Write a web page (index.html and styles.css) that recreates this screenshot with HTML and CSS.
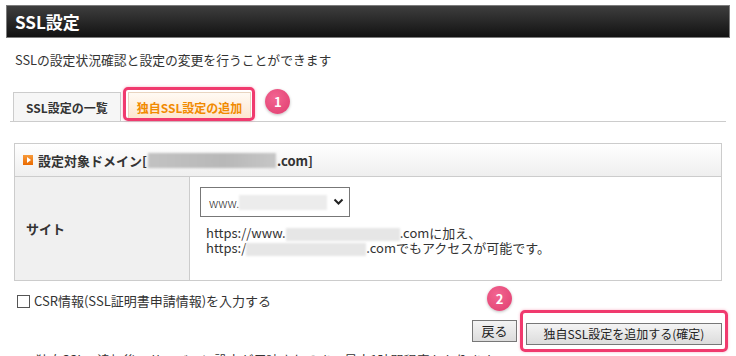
FILE: index.html
```html
<!DOCTYPE html>
<html lang="ja">
<head>
    <meta charset="UTF-8" />
    <title>SSL設定</title>
    <link rel="stylesheet" href="styles.css">
</head>
<body>
    <div class="page">
        <div class="title-bar">
            <h1>SSL設定</h1>
        </div>
        <p class="lead">SSLの設定状況確認と設定の変更を行うことができます</p>

        <div class="tabs">
            <div class="tab">SSL設定の一覧</div>
            <div class="tab tab-active">
                独自SSL設定の追加
                <span class="mark mark-tab"></span>
            </div>
            <span class="badge badge-tab">1</span>
        </div>

        <div class="panel">
            <div class="panel-head">
                <span class="icon-arrow"></span>
                設定対象ドメイン[<span class="blur blur-dark"></span>.com]
            </div>
            <div class="panel-row">
                <div class="cell-label">サイト</div>
                <div class="cell-value">
                    <div class="select">
                        <span>www.</span><span class="blur blur-select"></span>
                        <svg class="chevron" width="11" height="8" viewBox="0 0 11 8">
                            <path d="M1.5 1.5 L5.5 5.5 L9.5 1.5" fill="none" stroke="#222" stroke-width="2"/>
                        </svg>
                    </div>
                    <div class="note">
                        <div class="note-line">https://www.<span class="blur blur-a"></span>.comに加え、</div>
                        <div class="note-line">https:/<span class="blur blur-b"></span>.comでもアクセスが可能です。</div>
                    </div>
                </div>
            </div>
        </div>

        <label class="check">
            <span class="box"></span>CSR情報(SSL証明書申請情報)を入力する
        </label>

        <div class="actions">
            <button class="btn btn-back">戻る</button>
            <div class="btn-wrap">
                <button class="btn btn-main">独自SSL設定を追加する(確定)</button>
                <span class="mark mark-btn"></span>
                <span class="badge badge-btn">2</span>
            </div>
        </div>

        <p class="foot">※独自SSLの追加後、サーバーに設定が反映されるまで最大1時間程度かかります。</p>
    </div>
</body>
</html>
```

FILE: styles.css
```css
body {
    font-family: "Noto Sans CJK JP", "DejaVu Sans", sans-serif;
    margin: 0;
    padding: 0;
    color: #333;
    background: #fff;
    overflow: hidden;
}

.page {
    width: 724px;
    height: 356px;
    padding: 5px 6px 0 6px;
}

.title-bar {
    height: 31px;
    border: 1px solid #7c7c7c;
    background: linear-gradient(#3e3e3e, #121212);
    display: flex;
    align-items: center;
    padding-left: 8px;
}

    .title-bar h1 {
        margin: 0;
        font-size: 17px;
        font-weight: bold;
        color: #fff;
        line-height: 1;
    }

.lead {
    margin: 14px 0 0 9px;
    font-size: 12.8px;
    line-height: 16px;
}

.tabs {
    margin: 24px 4px 0 4px;
    display: flex;
    align-items: flex-end;
    border-bottom: 1px solid #ccc;
    height: 29px;
}

.tab {
    position: relative;
    height: 29px;
    box-sizing: border-box;
    margin-left: 3px;
    padding: 0 12px;
    border: 1px solid #ccc;
    border-bottom: none;
    background: #f6f6f6;
    font-size: 12px;
    font-weight: bold;
    line-height: 29px;
}

.tab-active {
    margin-left: 7px;
    padding: 0 8px;
    color: #f18a00;
    background: linear-gradient(#fffaf4, #fde4cb);
    border-color: #e8d4c0;
}

.mark {
    position: absolute;
    border: 3px solid #f03a6e;
    border-radius: 5px;
    box-shadow: 0 0 3px rgba(240, 58, 110, 0.4);
}

.mark-tab {
    left: -6px;
    right: -5px;
    top: -6px;
    bottom: 0;
}

.badge {
    width: 25px;
    height: 25px;
    border-radius: 50%;
    background: radial-gradient(circle at 40% 35%, #f26591, #e03d6f);
    box-shadow: 0 1px 3px rgba(0, 0, 0, 0.25);
    color: #fff;
    font-size: 13px;
    font-weight: bold;
    line-height: 25px;
    text-align: center;
}

.badge-tab {
    align-self: flex-start;
    margin: -3px 0 0 14px;
}

.panel {
    margin: 21px 8px 0 8px;
    border: 1px solid #ccc;
}

.panel-head {
    height: 32px;
    display: flex;
    align-items: center;
    padding-left: 8px;
    border-bottom: 1px solid #ccc;
    background: linear-gradient(#fff, #efefef);
    font-size: 13px;
    font-weight: bold;
}

.icon-arrow {
    width: 10px;
    height: 10px;
    margin-right: 5px;
    background: linear-gradient(#f79a3a, #ea6a00);
    position: relative;
}

    .icon-arrow::after {
        content: "";
        position: absolute;
        left: 4px;
        top: 2px;
        border-left: 4px solid #fff;
        border-top: 3px solid transparent;
        border-bottom: 3px solid transparent;
    }

.blur {
    display: inline-block;
    vertical-align: middle;
    filter: blur(1px);
}

.blur-dark {
    width: 128px;
    height: 15px;
    margin: 0 1px;
    background: linear-gradient(90deg, #c2c2c2, #b8b8b8 60%, #c6c6c6);
}

.blur-select {
    width: 88px;
    height: 15px;
    background: #ececec;
}

.blur-a {
    width: 114px;
    height: 13px;
    background: #e6e6e6;
}

.blur-b {
    width: 120px;
    height: 13px;
    background: #e6e6e6;
}

.panel-row {
    display: grid;
    grid-template-columns: 175px 1fr;
    height: 103px;
}

.cell-label {
    background: #f0f0f0;
    border-right: 1px solid #ccc;
    display: flex;
    align-items: center;
    padding-left: 11px;
    font-size: 13px;
    font-weight: bold;
}

.cell-value {
    padding: 10px 0 0 10px;
}

.select {
    width: 150px;
    height: 30px;
    box-sizing: border-box;
    border: 1px solid #777;
    display: flex;
    align-items: center;
    padding-left: 8px;
    font-size: 12px;
    font-weight: 300;
    color: #222;
}

    .select .chevron {
        margin-left: 6px;
    }

.note {
    margin: 8px 0 0 6px;
    font-size: 13px;
    line-height: 15px;
}

.note-line {
    height: 15px;
}

.check {
    display: flex;
    align-items: center;
    margin: 12px 0 0 11px;
    font-size: 13px;
    line-height: 16px;
}

    .check .box {
        width: 11px;
        height: 11px;
        border: 1px solid #555;
        margin-right: 4px;
    }

.actions {
    display: flex;
    justify-content: flex-end;
    gap: 9px;
    margin: 11px 8px 0 0;
}

.btn {
    height: 22px;
    padding: 0 7px;
    border: 1px solid #777;
    background: linear-gradient(#f4f4f4, #dcdcdc);
    font-family: "Noto Sans CJK JP", sans-serif;
    font-size: 12px;
    color: #222;
    line-height: 20px;
}

.btn-back {
    width: 45px;
    padding: 0;
    font-size: 13px;
}

.btn-wrap {
    position: relative;
}

.btn-main {
    width: 196px;
}

.mark-btn {
    left: -6px;
    right: -6px;
    top: -10px;
    bottom: -7px;
}

.badge-btn {
    position: absolute;
    left: -39px;
    top: -34px;
}

.foot {
    margin: 7px 0 0 17px;
    font-size: 13px;
    line-height: 16px;
}
```
